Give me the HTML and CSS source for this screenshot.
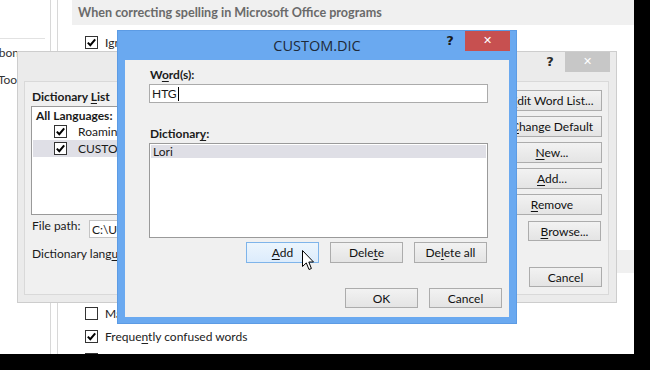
FILE: index.html
```html
<!DOCTYPE html>
<html>
<head>
<meta charset="utf-8">
<link rel="stylesheet" href="styles.css">
</head>
<body>
<div class="screen">
  <aside class="nav">
    <div class="nav-sep"></div>
    <div class="nav-item ribbon"><span>Customize Ribbon</span></div>
    <div class="nav-item qat"><span>Quick Access Toolbar</span></div>
  </aside>
  <div class="gutter"></div>
  <main class="page">
    <div class="sec-head">When correcting spelling in Microsoft Office programs</div>
    <div class="opts first">
      <div class="opt"><span class="cb"><svg viewBox="0 0 11 11"><path d="M1.8 5.6 L4.3 8.2 L9.2 2.4"/></svg></span><span>Ignore words in UPPERCASE</span></div>
      <div class="opt"><span class="cb"><svg viewBox="0 0 11 11"><path d="M1.8 5.6 L4.3 8.2 L9.2 2.4"/></svg></span><span>Ignore words that contain numbers</span></div>
      <div class="opt"><span class="cb"><svg viewBox="0 0 11 11"><path d="M1.8 5.6 L4.3 8.2 L9.2 2.4"/></svg></span><span>Ignore Internet and file addresses</span></div>
      <div class="opt"><span class="cb"><svg viewBox="0 0 11 11"><path d="M1.8 5.6 L4.3 8.2 L9.2 2.4"/></svg></span><span>Flag repeated words</span></div>
      <div class="opt"><span class="cb"></span><span>Enforce accented uppercase in French</span></div>
      <div class="opt"><span class="cb"></span><span>Suggest from main dictionary only</span></div>
      <div class="opt"><span class="btn"><span>Custom Dictionaries...</span></span></div>
    </div>
    <div class="sec-head second">When correcting spelling and grammar in Word</div>
    <div class="opts">
      <div class="opt"><span class="cb"><svg viewBox="0 0 11 11"><path d="M1.8 5.6 L4.3 8.2 L9.2 2.4"/></svg></span><span>Check spelling as you type</span></div>
      <div class="opt"><span class="cb"></span><span>Mark grammar errors as you type</span></div>
      <div class="opt"><span class="cb"><svg viewBox="0 0 11 11"><path d="M1.8 5.6 L4.3 8.2 L9.2 2.4"/></svg></span><span>Freque<u>n</u>tly confused words</span></div>
      <div class="opt"><span class="cb"><svg viewBox="0 0 11 11"><path d="M1.8 5.6 L4.3 8.2 L9.2 2.4"/></svg></span><span>Check grammar with spelling</span></div>
    </div>
  </main>

  <section class="win dict-list">
    <div class="titlebar">
      <div class="title">Custom Dictionaries</div>
      <div class="help">?</div>
      <div class="close inactive">&#x2715;</div>
    </div>
    <div class="panel">
      <div class="dl-top">
        <div class="dl-left">
          <div class="lbl b">Dictionary <u>L</u>ist</div>
          <div class="listbox dl-list">
            <div class="li head b"><span>All Languages:</span></div>
            <div class="li"><span class="cb small"><svg viewBox="0 0 11 11"><path d="M1.8 5.6 L4.3 8.2 L9.2 2.4"/></svg></span><span>RoamingCustom.dic (Default)</span></div>
            <div class="li sel"><span class="cb small"><svg viewBox="0 0 11 11"><path d="M1.8 5.6 L4.3 8.2 L9.2 2.4"/></svg></span><span>CUSTOM.DIC</span></div>
          </div>
        </div>
        <div class="dl-buttons">
          <span class="btn wide"><span><u>E</u>dit Word List...</span></span>
          <span class="btn wide"><span><u>C</u>hange Default</span></span>
          <span class="btn wide"><span><u>N</u>ew...</span></span>
          <span class="btn wide"><span><u>A</u>dd...</span></span>
          <span class="btn wide"><span><u>R</u>emove</span></span>
        </div>
      </div>
      <div class="dl-path">
        <span class="lbl path-lbl">File path:</span>
        <span class="field path"><span>C:\Users\Lori\AppData\Roaming\Microsoft\UProof\CUSTOM.DIC</span></span>
        <span class="btn std"><span><u>B</u>rowse...</span></span>
      </div>
      <div class="dl-lang">
        <span class="lbl">Dictionary lang<u>u</u>age:</span>
      </div>
      <div class="dl-foot">
        <span class="btn std"><span>OK</span></span>
        <span class="btn std"><span>Cancel</span></span>
      </div>
    </div>
  </section>

  <section class="win custom-dic">
    <div class="titlebar">
      <div class="title">CUSTOM.DIC</div>
      <div class="help">?</div>
      <div class="close active">&#x2715;</div>
    </div>
    <div class="cd-body">
      <div class="lbl b">W<u>o</u>rd(s):</div>
      <div class="field word"><span>HTG</span><span class="caret"></span></div>
      <div class="lbl b dict-lbl">Dictionar<u>y</u>:</div>
      <div class="listbox cd-list">
        <div class="li sel lori"><span>Lori</span></div>
      </div>
      <div class="cd-actions">
        <span class="btn std hover"><span><u>A</u>dd</span></span>
        <span class="btn std"><span>Dele<u>t</u>e</span></span>
        <span class="btn std"><span>De<u>l</u>ete all</span></span>
      </div>
      <div class="cd-foot">
        <span class="btn std"><span>OK</span></span>
        <span class="btn std"><span>Cancel</span></span>
      </div>
    </div>
  </section>

  <svg class="cursor" width="13" height="21" viewBox="0 0 13 21"><path d="M0.5 0.5 V16.5 L4.3 12.9 L7 19.5 L9.4 18.5 L6.8 12 H11.5 Z" fill="#fff" stroke="#000" stroke-width="1" stroke-linejoin="miter"/></svg>
</div>
</body>
</html>
```

FILE: styles.css
```css
html, body {
  margin: 0;
  padding: 0;
}
body {
  width: 650px;
  height: 370px;
  background: #000;
  overflow: hidden;
  font-family: Lato, "Noto Sans", sans-serif;
  font-size: 12px;
  color: #1a1a1a;
}
u { text-decoration: underline; text-underline-offset: 2px; }

.screen {
  position: relative;
  width: 634px;
  height: 354px;
  background: #fff;
  display: flex;
  overflow: hidden;
}

/* ---------- background window ---------- */
.nav {
  width: 50px;
  flex: none;
  border-right: 1px solid #d8d8d8;
  overflow: hidden;
  white-space: nowrap;
}
.nav-sep {
  margin-top: 38px;
  width: 45px;
  height: 1px;
  background: #e2e2e2;
}
.nav-item {
  height: 27px;
  line-height: 27px;
  font-size: 12px;
  color: #333;
  display: flex;
  justify-content: flex-end;
}
.nav-item.ribbon { width: 19px; }
.nav-item.qat { width: 37px; }

.gutter {
  width: 6px;
  flex: none;
  border-right: 1px solid #d8d8d8;
}
.page {
  flex: 1;
  padding-left: 14px;
  overflow: hidden;
}
.sec-head {
  height: 25px;
  line-height: 25px;
  background: #f0f0f0;
  padding-left: 6px;
  font-weight: bold;
  font-size: 12.6px;
  color: #6a6a6a;
  white-space: nowrap;
}
.sec-head.second { height: 23px; line-height: 23px; }
.opts {
  padding: 6px 0 0 13px;
}
.opts.first {
  height: 225px;
  box-sizing: border-box;
  overflow: hidden;
}
.opt {
  height: 23px;
  display: flex;
  align-items: center;
  gap: 7px;
  white-space: nowrap;
  color: #222;
}
.cb {
  width: 13px;
  height: 13px;
  box-sizing: border-box;
  border: 1px solid #333;
  background: #fff;
  display: inline-flex;
  flex: none;
}
.cb svg {
  width: 11px;
  height: 11px;
}
.cb path {
  fill: none;
  stroke: #000;
  stroke-width: 2;
}
.cb.small { width: 13px; height: 13px; }

/* ---------- generic window parts ---------- */
.win {
  position: absolute;
  box-sizing: border-box;
  display: flex;
  flex-direction: column;
}
.titlebar {
  display: flex;
  align-items: flex-start;
  flex: none;
}
.title {
  flex: 1;
  text-align: center;
  white-space: nowrap;
}
.help {
  width: 12px;
  height: 20px;
  line-height: 20px;
  text-align: center;
  font-weight: bold;
  font-size: 13px;
  color: #2b2b2b;
  margin-right: 9px;
  font-family: "DejaVu Sans", sans-serif;
}
.close {
  width: 45px;
  height: 20px;
  line-height: 20px;
  text-align: center;
  color: #fff;
  font-size: 11px;
  font-weight: bold;
  font-family: "DejaVu Sans", sans-serif;
}
.close.inactive { background: #c7c7c7; }
.close.active { background: #c75050; }

.lbl { white-space: nowrap; line-height: 14px; }
.b { font-weight: bold; }

.btn {
  display: inline-flex;
  align-items: center;
  justify-content: center;
  box-sizing: border-box;
  border: 1px solid #acacac;
  background: linear-gradient(#f2f2f2, #e4e4e4);
  color: #111;
  white-space: nowrap;
  font-size: 12px;
}
.btn.std { width: 73px; height: 21px; }
.btn.wide { width: 100px; height: 21px; }
.btn.hover {
  border-color: #7eb4ea;
  background: linear-gradient(#ecf5fd, #dcecfc);
}

.listbox {
  box-sizing: border-box;
  border: 1px solid #9a9a9a;
  background: #fff;
  overflow: hidden;
}
.li {
  white-space: nowrap;
  display: flex;
  align-items: center;
}
.sel { background: #dfdfe6; }

.field {
  box-sizing: border-box;
  border: 1px solid #ababab;
  background: #fff;
  white-space: nowrap;
  overflow: hidden;
  display: flex;
  align-items: center;
}

/* ---------- Custom Dictionaries dialog ---------- */
.dict-list {
  left: 17px;
  top: 51px;
  width: 600px;
  height: 252px;
  background: #ebebeb;
  border: 1px solid #cdcdcd;
}
.dict-list .titlebar { height: 29px; padding-right: 6px; }
.dict-list .title { line-height: 20px; padding-left: 72px; font-size: 14px; color: #444; }
.panel {
  flex: 1;
  margin: 0 7px 7px 6px;
  background: #f0f0f0;
  border: 1px solid #d9d9d9;
  padding: 8px 6px 7px 6px;
  display: flex;
  flex-direction: column;
}
.dl-top {
  display: flex;
  gap: 12px;
  height: 125px;
}
.dl-left {
  flex: 1;
  display: flex;
  flex-direction: column;
}
.dl-left .lbl { padding-left: 1px; }
.dl-list {
  margin-top: 2px;
  height: 109px;
  padding: 0 1px;
}
.dl-list .li { height: 17px; }
.dl-list .li.head { height: 16px; padding-left: 3px; }
.dl-list .li .cb { margin-left: 21px; margin-right: 11px; }
.dl-buttons {
  display: flex;
  flex-direction: column;
  gap: 5px;
}
.dl-path {
  margin-top: 5px;
  height: 21px;
  display: flex;
  align-items: flex-start;
}
.path-lbl { width: 58px; padding-left: 1px; margin-top: -1px; box-sizing: border-box; }
.field.path {
  width: 428px;
  height: 18px;
  padding-left: 2px;
  border-color: #c4c4c4;
  margin-right: 11px;
}
.dl-path .btn { margin-top: 1px; height: 20px; }
.dl-lang {
  margin-top: 5px;
  height: 16px;
  padding-left: 1px;
}
.dl-foot {
  margin-top: 5px;
  display: flex;
  justify-content: flex-end;
  gap: 12px;
}
.dl-foot .btn { height: 20px; }
.dl-foot .btn:first-child { width: 70px; }

/* ---------- CUSTOM.DIC dialog ---------- */
.custom-dic {
  left: 117px;
  top: 30px;
  width: 400px;
  height: 294px;
  background: #6aa9f0;
  border: 1px solid #5c9be4;
}
.custom-dic .titlebar { height: 29px; padding-right: 6px; }
.custom-dic .title {
  line-height: 29px;
  padding-left: 72px;
  font-family: "Open Sans", "Noto Sans", sans-serif;
  font-size: 14.5px;
  color: #1e2a38;
}
.custom-dic .help { color: #1a1a1a; }
.cd-body {
  flex: 1;
  margin: 0 7px 6px 7px;
  background: #f0f0f0;
  padding: 8px 7px 0 24px;
  display: flex;
  flex-direction: column;
}
.cd-body .lbl { padding-left: 1px; }
.field.word {
  margin-top: 2px;
  width: 339px;
  height: 19px;
  padding-left: 2px;
}
.caret {
  display: inline-block;
  width: 1px;
  height: 14px;
  background: #000;
  margin-left: 1px;
}
.dict-lbl { margin-top: 24px; }
.cd-list {
  margin-top: 2px;
  width: 339px;
  height: 95px;
  padding: 1px;
}
.li.lori { height: 13px; line-height: 13px; padding-left: 2px; }
.cd-actions {
  margin-top: 4px;
  width: 338px;
  display: flex;
  justify-content: flex-end;
  gap: 11px;
}
.cd-foot {
  margin-top: 25px;
  display: flex;
  justify-content: flex-end;
  gap: 11px;
}
.cd-foot .btn { height: 20px; }

.cursor {
  position: absolute;
  left: 302px;
  top: 250px;
}
```
